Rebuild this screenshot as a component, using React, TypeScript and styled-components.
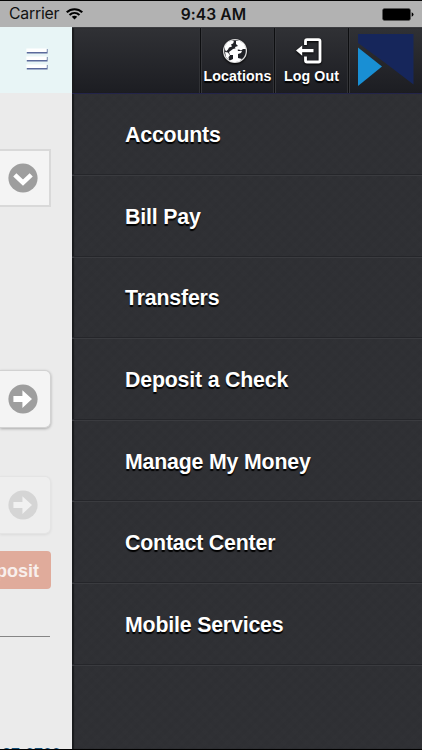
import React from "react";
import styled, { createGlobalStyle } from "styled-components";

const GlobalStyle = createGlobalStyle`
  *, *::before, *::after { box-sizing: border-box; }
  body { margin: 0; background: #000; overflow: hidden; }
`;

const Screen = styled.div`
  width: 422px;
  height: 750px;
  display: flex;
  flex-direction: column;
  overflow: hidden;
  background: #000;
  border-top: 1px solid #050505;
  border-bottom: 1px solid #000;
  font-family: "Liberation Sans", Arial, sans-serif;
`;

const StatusBar = styled.header`
  flex: 0 0 26px;
  display: grid;
  grid-template-columns: 1fr auto 1fr;
  align-items: center;
  padding: 0 8px 0 9px;
  background: #b2b2b2;
  color: #111;
  font-family: Inter, "Liberation Sans", sans-serif;
  font-size: 15.8px;
  line-height: 24px;
`;

const Carrier = styled.div`
  display: flex;
  align-items: center;
  gap: 7px;
  letter-spacing: -0.22px;
`;

const Clock = styled.div`
  padding: 2px 0 0 4px;
  font-weight: 600;
  font-size: 15.6px;
  letter-spacing: 0.1px;
`;

const BatterySlot = styled.div`
  display: flex;
  justify-content: flex-end;
`;

const Body = styled.div`
  flex: 1;
  min-height: 0;
  display: flex;
`;

const Page = styled.main`
  flex: 0 0 72px;
  display: flex;
  flex-direction: column;
  background: #ebebeb;
  overflow: hidden;
`;

const PageHeader = styled.div`
  flex: 0 0 66px;
  display: flex;
  align-items: center;
  justify-content: flex-end;
  padding: 0 24px 1px 0;
  background: #e8f5f6;
`;

const Form = styled.div`
  display: flex;
  flex-direction: column;
  width: 51px;
  padding-top: 56px;
`;

const Field = styled.div<{ $gap: number; $variant: "select" | "card" | "disabled" }>`
  flex: 0 0 58px;
  margin-bottom: ${(p) => p.$gap}px;
  display: flex;
  align-items: center;
  justify-content: flex-end;
  padding-right: ${(p) => (p.$variant === "select" ? 11 : 12)}px;
  background: ${(p) => (p.$variant === "disabled" ? "#eeeeee" : "#f4f4f4")};
  border: ${(p) => (p.$variant === "select" ? "2px solid #d9d9d9" : p.$variant === "card" ? "1px solid #d2d2d2" : "1px solid #e4e4e4")};
  border-left: 0;
  border-radius: ${(p) => (p.$variant === "select" ? "0" : "0 6px 6px 0")};
  box-shadow: ${(p) =>
    p.$variant === "select" ? "none" : p.$variant === "card" ? "0 1px 3px rgba(0,0,0,.28)" : "0 1px 3px rgba(0,0,0,.07)"};
`;

const DepositButton = styled.button`
  height: 38px;
  margin: 0;
  padding: 2px 12px 0 0;
  display: flex;
  align-items: center;
  justify-content: flex-end;
  border: 0;
  border-radius: 0 4px 4px 0;
  background: #e0ab9b;
  color: #f8efec;
  font: bold 18px "Liberation Sans", Arial, sans-serif;
`;

const Rule = styled.hr`
  width: 50px;
  height: 1px;
  margin: 47px 0 0;
  border: 0;
  background: #858585;
`;

const Phone = styled.div`
  margin: 109px 0 0 2px;
  color: #124f78;
  font-weight: bold;
  font-size: 16px;
  line-height: 18px;
  white-space: nowrap;
`;

const Drawer = styled.aside`
  flex: 1;
  display: flex;
  flex-direction: column;
  background-color: #2f3034;
  background-image: repeating-linear-gradient(45deg, rgba(255,255,255,.005) 0 4px, transparent 4px 8px),
    repeating-linear-gradient(-45deg, rgba(0,0,0,.02) 0 4px, transparent 4px 8px);
  box-shadow: inset 2px 0 1px #1a1b1d;
`;

const Toolbar = styled.div`
  flex: 0 0 67px;
  display: flex;
  justify-content: flex-end;
  background: linear-gradient(#303135, #1c1d22);
  border-top: 1px solid #3b3c40;
  border-bottom: 1px solid #23244a;
  box-shadow: inset 2px 0 1px #1a1b1d;
`;

const ToolButton = styled.button<{ $width: number; $top?: number }>`
  width: ${(p) => p.$width}px;
  margin: 0;
  padding: ${(p) => p.$top ?? 10}px 0 0;
  display: flex;
  flex-direction: column;
  align-items: center;
  gap: 4px;
  border: 0;
  border-left: 1px solid #0d0e10;
  box-shadow: inset 1px 0 #36373b, -1px 0 #303135;
  background: none;
  color: #fff;
  font: bold 14.2px/17px "Liberation Sans", Arial, sans-serif;
  letter-spacing: 0.12px;
  text-shadow: 0 2px 1px #000;
  white-space: nowrap;
`;

const ToolIcon = styled.svg`
  margin-right: 6px;
  filter: drop-shadow(0 1px 1px #000);
`;

const Menu = styled.nav`
  flex: 1;
  display: flex;
  flex-direction: column;
`;

const MenuItem = styled.a`
  flex: 0 0 81.65px;
  display: flex;
  align-items: center;
  padding: 3px 0 0 53px;
  border-bottom: 1px solid #25262a;
  box-shadow: 0 1px #3a3b3f;
  color: #fff;
  font-weight: bold;
  font-size: 21.3px;
  line-height: 24px;
  letter-spacing: -0.17px;
  text-shadow: 0 2px 1px #000;

  &:first-child {
    flex-basis: 80.9px;
  }
`;

const Wifi = () => (
  <svg width="17" height="12" viewBox="0 0 16 12" preserveAspectRatio="none" fill="none" stroke="#000" strokeWidth="2">
    <path d="M.7 4.3C4.8.2 11.2.2 15.3 4.3M3.3 7c2.8-2.6 6.6-2.6 9.4 0" />
    <path d="M5.4 8.8c1.5-1.4 3.7-1.4 5.2 0L8 11.5z" fill="#000" stroke="none" />
  </svg>
);

const Battery = () => (
  <svg width="32" height="13" viewBox="0 0 32 13">
    <rect x=".5" y=".5" width="28" height="12" rx="2" fill="#000" stroke="#555" strokeWidth=".6" />
    <path d="M29.7 4.2q1.8.8 1.8 2.3t-1.8 2.3z" />
  </svg>
);

const Hamburger = () => (
  <svg width="22" height="23" viewBox="0 0 22 23">
    {[0.5, 8.5, 16.5].map((y) => (
      <g key={y}>
        <path d={`M.8 ${y + 3.2}H20.6V${y + 0.5}h1v4.6H.8z`} fill="#5b6a9b" />
        <rect x=".3" y={y} width="20.3" height="3.5" fill="#fff" />
      </g>
    ))}
  </svg>
);

const CircleIcon = ({ down, faded }: { down?: boolean; faded?: boolean }) => (
  <svg width="30" height="30" viewBox="0 0 30 30">
    <circle cx="15" cy="15" r="14.6" fill={faded ? "#d5d5d5" : "#9e9e9e"} />
    {down ? (
      <path d="m6.8 11.8 8.2 7.8 8.2-7.8" fill="none" stroke="#fff" strokeWidth="4.6" />
    ) : (
      <path d="M5.4 12h9V6.2L24 15l-9.6 9v-6h-9z" fill={faded ? "#f1f1f1" : "#fff"} />
    )}
  </svg>
);

const Globe = () => (
  <ToolIcon width="26" height="26" viewBox="0 0 26 26">
    <circle cx="13" cy="13" r="11.4" fill="#202126" stroke="#d8d8d8" strokeWidth="1.3" />
    <path d="M3 8 6 4l4-1.500 2 1-1 2-2 1 1 2-3 1-1 2-2 2-1-2zM3 14l3 .5 2 3-1.500 1.500.5 3-3-3zM14 3l4 0 4 3 2 5-3 0-2 1.500-2-1-3 .5-1-3 3-1-2-2zM11 11l4-1 1 3 4 0-1 2-3 1v4l4 1-3 2.500-5 .8-5-1.300 4-2v-4h-3l-1-3z" fill="#fff" />
  </ToolIcon>
);

const Exit = () => (
  <ToolIcon width="26" height="26" viewBox="0 0 26 26">
    <path d="M9.5 7V3.500Q9.500 1.700 11 1.700H22.500Q24 1.700 24 3.200V22.500Q24 24 22.500 24H11Q9.500 24 9.500 22.500V18.500" fill="none" stroke="#fff" strokeWidth="2.8" />
    <path d="M0 12.600 6.200 7.500V10.900H17.500V14.300H6.200V17.700z" fill="#fff" />
  </ToolIcon>
);

const Logo = () => (
  <svg width="56" height="54" viewBox="0 0 56 54">
    <path d="M0 1h55.500v50.500L26 29 0 10z" fill="#16265b" />
    <path d="M0 14.500 24 33.500 0 53z" fill="#198fd4" />
  </svg>
);

const items = ["Accounts", "Bill Pay", "Transfers", "Deposit a Check", "Manage My Money", "Contact Center", "Mobile Services"];

export default function App() {
  return (
    <>
      <GlobalStyle />
      <Screen>
        <StatusBar>
          <Carrier>Carrier <Wifi /></Carrier>
          <Clock>9:43 AM</Clock>
          <BatterySlot><Battery /></BatterySlot>
        </StatusBar>
        <Body>
          <Page>
            <PageHeader><Hamburger /></PageHeader>
            <Form>
              <Field $variant="select" $gap={163}><CircleIcon down /></Field>
              <Field $variant="card" $gap={48}><CircleIcon /></Field>
              <Field $variant="disabled" $gap={17}><CircleIcon faded /></Field>
              <DepositButton>Deposit</DepositButton>
              <Rule />
              <Phone>37-0700</Phone>
            </Form>
          </Page>
          <Drawer>
            <Toolbar>
              <ToolButton $width={74}><Globe />Locations</ToolButton>
              <ToolButton $width={74}><Exit />Log Out</ToolButton>
              <ToolButton $width={74} $top={5} aria-label="Home"><Logo /></ToolButton>
            </Toolbar>
            <Menu>
              {items.map((label) => <MenuItem key={label}>{label}</MenuItem>)}
            </Menu>
          </Drawer>
        </Body>
      </Screen>
    </>
  );
}
